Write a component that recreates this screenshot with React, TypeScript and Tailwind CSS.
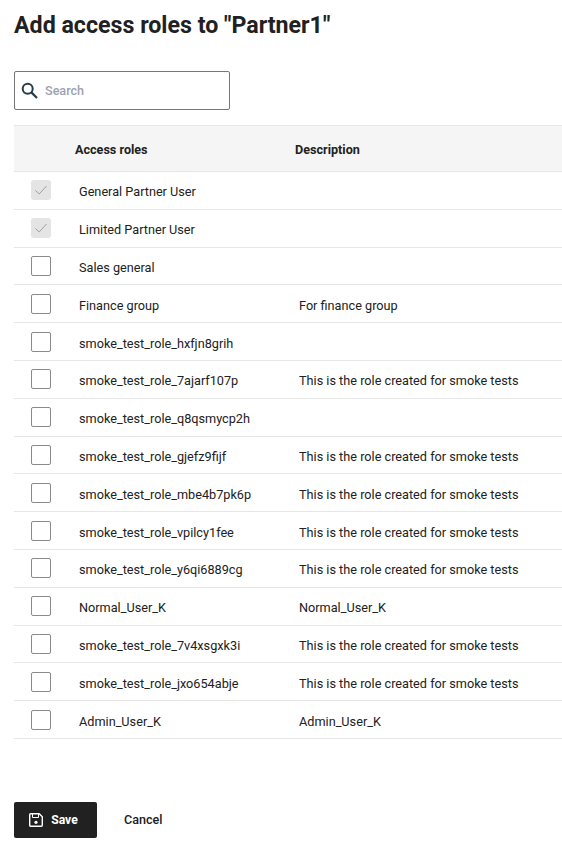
import React from "react";

type Role = { name: string; description?: string; locked?: boolean };

const smoke = "This is the role created for smoke tests";

const roles: Role[] = [
  { name: "General Partner User", locked: true },
  { name: "Limited Partner User", locked: true },
  { name: "Sales general" },
  { name: "Finance group", description: "For finance group" },
  { name: "smoke_test_role_hxfjn8grih" },
  { name: "smoke_test_role_7ajarf107p", description: smoke },
  { name: "smoke_test_role_q8qsmycp2h" },
  { name: "smoke_test_role_gjefz9fijf", description: smoke },
  { name: "smoke_test_role_mbe4b7pk6p", description: smoke },
  { name: "smoke_test_role_vpilcy1fee", description: smoke },
  { name: "smoke_test_role_y6qi6889cg", description: smoke },
  { name: "Normal_User_K", description: "Normal_User_K" },
  { name: "smoke_test_role_7v4xsgxk3i", description: smoke },
  { name: "smoke_test_role_jxo654abje", description: smoke },
  { name: "Admin_User_K", description: "Admin_User_K" },
];

const Checkbox = ({ locked }: { locked?: boolean }) =>
  locked ? (
    <span className="flex h-5 w-5 items-center justify-center rounded-[3px] bg-[#e4e4e4]">
      <svg width="14" height="14" viewBox="0 0 14 14" fill="none">
        <path d="M1.5 7.5 L5.2 11 L12.5 3" stroke="#a0a0a0" strokeWidth="1" />
      </svg>
    </span>
  ) : (
    <span className="box-content h-[18px] w-[18px] rounded-[2px] border border-[#8a8a8a] bg-white" />
  );

export default function App() {
  return (
    <div className="min-h-[843px] bg-white pl-[14px] text-[12.6px] font-medium text-[#212121] [font-family:Roboto,sans-serif]">
      <h1 className="pt-[9px] text-[23.2px] leading-[32px] font-bold">Add access roles to "Partner1"</h1>

      <div className="mt-[30px] flex h-[39px] w-[216px] items-center rounded-[2px] border border-[#777777] pl-[6px]">
        <svg width="17" height="17" viewBox="0 0 17 17" fill="none" stroke="#263c4c" strokeWidth="2">
          <circle cx="6.7" cy="6.7" r="5" />
          <path d="M10.4 10.4 L16 16" strokeWidth="2.2" />
        </svg>
        <span className="ml-[7px] pt-[2px] text-[#9ca3af]">Search</span>
      </div>

      <div className="mt-[15px]">
        <div className="flex h-[47px] items-center border-y border-[#e6e6e6] bg-[#f5f5f5] pt-[3px] font-bold">
          <span className="w-[281px] pl-[61px]">Access roles</span>
          <span>Description</span>
        </div>
        {roles.map((role) => (
          <div key={role.name} className="flex h-[37.8px] items-center border-b border-[#e6e6e6] text-[12.7px]">
            <span className="flex w-[54px] shrink-0 justify-center">
              <Checkbox locked={role.locked} />
            </span>
            <span className="ml-[11px] w-[220px] shrink-0 pt-[3px] [font-weight:450]">{role.name}</span>
            <span className="pt-[3px] [font-weight:450]">{role.description}</span>
          </div>
        ))}
      </div>

      <div className="mt-[63px] flex items-center">
        <button className="flex h-[36px] w-[83px] items-center justify-center gap-2 rounded-[2px] bg-[#212121] pr-[4px] text-[12.2px] font-bold text-white">
          <svg width="14" height="14" viewBox="0 0 14 14" fill="none" stroke="#ffffff" strokeWidth="1.4">
            <path d="M1.7 0.7 H10.2 L13.3 3.8 V12.3 A1 1 0 0 1 12.3 13.3 H1.7 A1 1 0 0 1 0.7 12.3 V1.7 A1 1 0 0 1 1.7 0.7 Z" />
            <path d="M3.5 1 V4.5 H9.5 V1" strokeWidth="1" />
            <circle cx="7" cy="9.3" r="1.6" fill="#ffffff" stroke="none" />
          </svg>
          Save
        </button>
        <button className="ml-[27px] text-[12.6px] font-medium">Cancel</button>
      </div>
    </div>
  );
}
